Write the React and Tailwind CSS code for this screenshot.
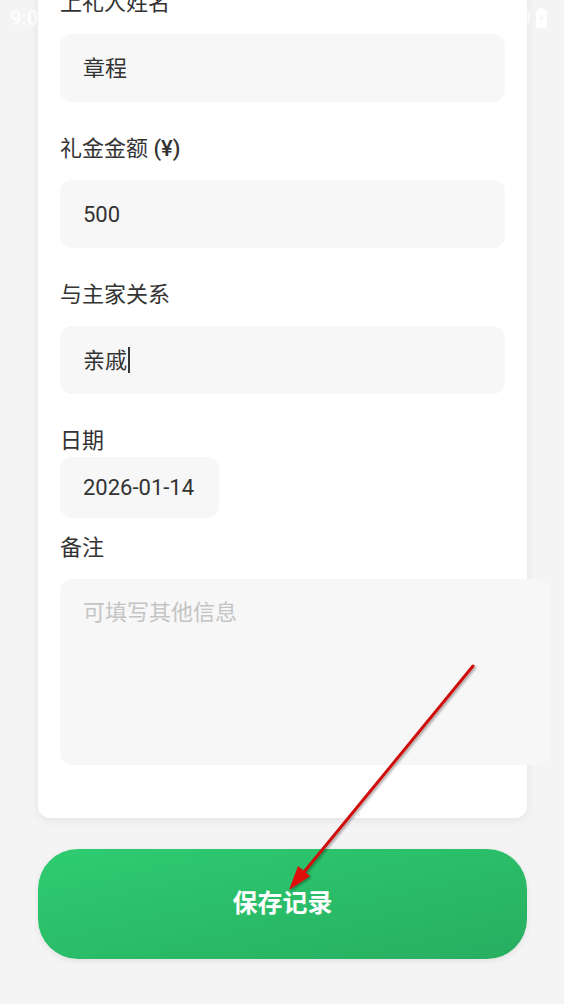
import React from "react";

const FONT = { fontFamily: "Roboto, 'Noto Sans CJK SC', sans-serif" };

function Label({ children, className = "" }) {
  return (
    <div className={`text-[22px] leading-[28px] text-[#333] ${className}`}>
      {children}
    </div>
  );
}

function Field({ value, cursor, className = "" }) {
  return (
    <div
      className={`h-[68px] rounded-[12px] bg-[#f7f7f7] px-[23px] flex items-center text-[22px] text-[#333] ${className}`}
    >
      <span>{value}</span>
      {cursor && <span className="ml-px inline-block w-[2px] h-[26px] bg-[#333]" />}
    </div>
  );
}

export default function App() {
  return (
    <div
      className="relative min-h-screen overflow-hidden bg-[#f4f4f4]"
      style={FONT}
    >
      {/* status bar, sits under the form card */}
      <div className="absolute inset-x-0 top-0 z-0 h-[36px] flex items-center justify-between pl-[10px] pr-[17px] text-white text-[20px] font-medium">
        <span>9:00</span>
        <div className="flex items-center gap-[5px]">
          <span>100</span>
          <svg width="11" height="20" viewBox="0 0 11 20">
            <rect x="0" y="2" width="11" height="18" rx="2" fill="white" />
            <rect x="3.5" y="0" width="4" height="2.5" fill="white" />
            <path d="M6.5 5 L3 11 H5.5 L4.5 16 L8 9.5 H5.5 Z" fill="#f4f4f4" />
          </svg>
        </div>
      </div>

      <div className="relative z-10 ml-[38px] mr-[37px]">
        <div className="-mt-[30px] pt-[19px] pb-[53px] px-[22px] bg-white rounded-[12px] shadow-[0_2px_10px_rgba(0,0,0,0.07)]">
          <Label className="mb-[17px]">上礼人姓名</Label>
          <Field value="章程" />

          <Label className="mt-[33px] mb-[17px]">
            礼金金额 <span className="font-medium">(¥)</span>
          </Label>
          <Field value="500" />

          <Label className="mt-[33px] mb-[17px]">与主家关系</Label>
          <Field value="亲戚" cursor />

          <Label className="mt-[33px] mb-[2px]">日期</Label>
          <div className="w-[159px] h-[61px] rounded-[12px] bg-[#f7f7f7] pl-[23px] flex items-center text-[22px] text-[#333]">
            2026-01-14
          </div>

          <Label className="mt-[16px] mb-[17px]">备注</Label>
          <textarea
            readOnly
            placeholder="可填写其他信息"
            className="block w-[490px] max-w-none h-[186px] resize-none rounded-[12px] bg-[#f7f7f7] px-[23px] pt-[20px] text-[22px] leading-[28px] text-[#333] placeholder:text-[#c4c4c4] outline-none"
            style={FONT}
          />
        </div>

        <button
          className="mt-[31px] w-full h-[110px] rounded-[40px] bg-linear-to-br from-[#2ecc71] to-[#27ae60] text-white text-[25px] font-bold shadow-[0_2px_6px_rgba(0,0,0,0.08)]"
          style={FONT}
        >
          保存记录
        </button>
      </div>

      {/* red pointer drawn over the page */}
      <svg
        className="absolute inset-0 z-20 pointer-events-none"
        width="564"
        height="1004"
        viewBox="0 0 564 1004"
      >
        <defs>
          <filter id="sh" x="-20%" y="-20%" width="140%" height="140%">
            <feDropShadow dx="1.5" dy="1.5" stdDeviation="1" floodColor="#000" floodOpacity="0.35" />
          </filter>
        </defs>
        <g filter="url(#sh)">
          <line x1="473" y1="666" x2="304" y2="872" stroke="#cf1111" strokeWidth="3" strokeLinecap="round" />
          <polygon points="289,890 310,876 298,866" fill="#e01010" />
        </g>
      </svg>
    </div>
  );
}
